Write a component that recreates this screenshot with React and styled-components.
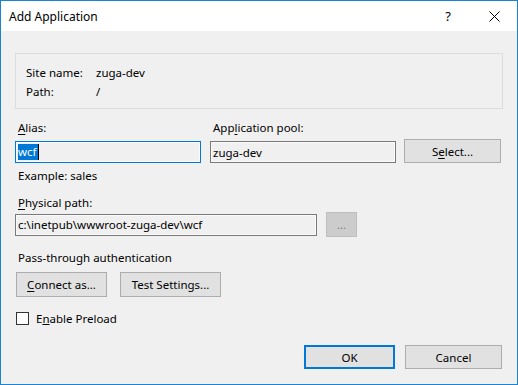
import styled, { createGlobalStyle } from "styled-components";

const GlobalStyle = createGlobalStyle`
    html, body {
        margin: 0;
        padding: 0;
        background: #ffffff;
    }
    body {
        font-family: "Noto Sans", "Liberation Sans", sans-serif;
        font-size: 11.5px;
        color: #000000;
    }
`

const Window = styled.div`
    width: 518px;
    height: 385px;
    box-sizing: border-box;
    border: 1px solid #1883d7;
    display: flex;
    flex-direction: column;
    overflow: hidden;
`

const TitleBar = styled.div`
    height: 30px;
    background: #ffffff;
    display: flex;
    align-items: center;
    padding-left: 8px;
    & span{
        flex: 1;
        font-size: 12px;
    }
`

const TitleButton = styled.div`
    width: 46px;
    height: 30px;
    display: flex;
    align-items: center;
    justify-content: center;
    font-size: 13px;
`

const Body = styled.div`
    flex: 1;
    background: #f0f0f0;
    display: flex;
    flex-direction: column;
    padding: 22px 14px 15px 14px;
`

const GroupBox = styled.div`
    height: 56px;
    box-sizing: border-box;
    border: 1px solid #dcdcdc;
    display: grid;
    grid-template-columns: 70px 1fr;
    grid-auto-rows: 19px;
    align-items: center;
    padding: 9px 10px 0;
`

const Row = styled.div`
    display: flex;
    align-items: ${props => props.align || "center"};
    gap: ${props => props.gap || 0}px;
    margin-top: ${props => props.top || 0}px;
`

const Field = styled.div`
    display: flex;
    flex-direction: column;
    width: ${props => props.width}px;
    margin-right: ${props => props.right || 0}px;
`

const Label = styled.div`
    height: 16px;
    line-height: 16px;
    padding-left: ${props => props.indent || 0}px;
    margin-top: ${props => props.top || 0}px;
    margin-bottom: ${props => props.bottom || 0}px;
    white-space: nowrap;
    & u{
        text-underline-offset: 2px;
    }
`

const TextBox = styled.div`
    height: 22px;
    box-sizing: border-box;
    border: 1px solid ${props => props.focused ? "#0078d7" : "#7a7a7a"};
    background: #f0f0f0;
    box-shadow: inset 0 0 0 1px #fafafa;
    width: ${props => props.width ? props.width + "px" : "100%"};
    display: flex;
    align-items: center;
    padding-left: 2px;
    white-space: nowrap;
`

const Selected = styled.span`
    background: #0078d7;
    color: #ffffff;
    line-height: 16px;
    padding-right: 1px;
    border-right: 1px solid #000;
`

const Button = styled.div`
    width: ${props => props.width}px;
    height: ${props => props.height || 24}px;
    box-sizing: border-box;
    border: ${props => props.primary ? "2px solid #0078d7" : "1px solid #adadad"};
    background: ${props => props.disabled ? "#cccccc" : "#e1e1e1"};
    color: ${props => props.disabled ? "#838383" : "#000000"};
    border-color: ${props => props.disabled ? "#bfbfbf" : props.primary ? "#0078d7" : "#adadad"};
    display: flex;
    align-items: center;
    justify-content: center;
    white-space: nowrap;
    & u{
        text-underline-offset: 2px;
    }
`

const Check = styled.div`
    width: 13px;
    height: 13px;
    box-sizing: border-box;
    border: 1px solid #333333;
    background: #ffffff;
    margin-left: 1px;
    margin-right: 7px;
`

const Footer = styled.div`
    margin-top: auto;
    display: flex;
    justify-content: flex-end;
    gap: 10px;
    padding-right: 1px;
`

const CloseIcon = () => (
    <svg width="11" height="11" viewBox="0 0 11 11">
        <path d="M0.5 0.5 L10.5 10.5 M10.5 0.5 L0.5 10.5" stroke="#000" strokeWidth="1" fill="none" />
    </svg>
)

const App = () => {
    return (
        <>
            <GlobalStyle />
            <Window>
                <TitleBar>
                    <span>Add Application</span>
                    <TitleButton>?</TitleButton>
                    <TitleButton><CloseIcon /></TitleButton>
                </TitleBar>
                <Body>
                    <GroupBox>
                        <span>Site name:</span><span>zuga-dev</span>
                        <span>Path:</span><span>/</span>
                    </GroupBox>

                    <Row align="flex-end" top={11}>
                        <Field width={186} right={9}>
                            <Label indent={3} bottom={5}><u>A</u>lias:</Label>
                            <TextBox focused><Selected>wcf</Selected></TextBox>
                        </Field>
                        <Field width={186} right={8}>
                            <Label indent={3} bottom={5}>App<u>l</u>ication pool:</Label>
                            <TextBox>zuga-dev</TextBox>
                        </Field>
                        <Button width={97}>S<u>e</u>lect...</Button>
                    </Row>

                    <Label indent={3} top={5}>Example: sales</Label>
                    <Label indent={3} top={11}><u>P</u>hysical path:</Label>

                    <Row top={1} gap={9}>
                        <TextBox width={302}>c:\inetpub\wwwroot-zuga-dev\wcf</TextBox>
                        <Button width={31} height={25} disabled>...</Button>
                    </Row>

                    <Label indent={3} top={13}>Pass-through authentication</Label>

                    <Row top={6} gap={13}>
                        <Button width={91} height={25} style={{ marginLeft: 1 }}><u>C</u>onnect as...</Button>
                        <Button width={101} height={25}>Test Settings...</Button>
                    </Row>

                    <Row top={14}>
                        <Check />
                        <span>E<u>n</u>able Preload</span>
                    </Row>

                    <Footer>
                        <Button width={91} primary>OK</Button>
                        <Button width={97}>Cancel</Button>
                    </Footer>
                </Body>
            </Window>
        </>
    )
}

export default App
